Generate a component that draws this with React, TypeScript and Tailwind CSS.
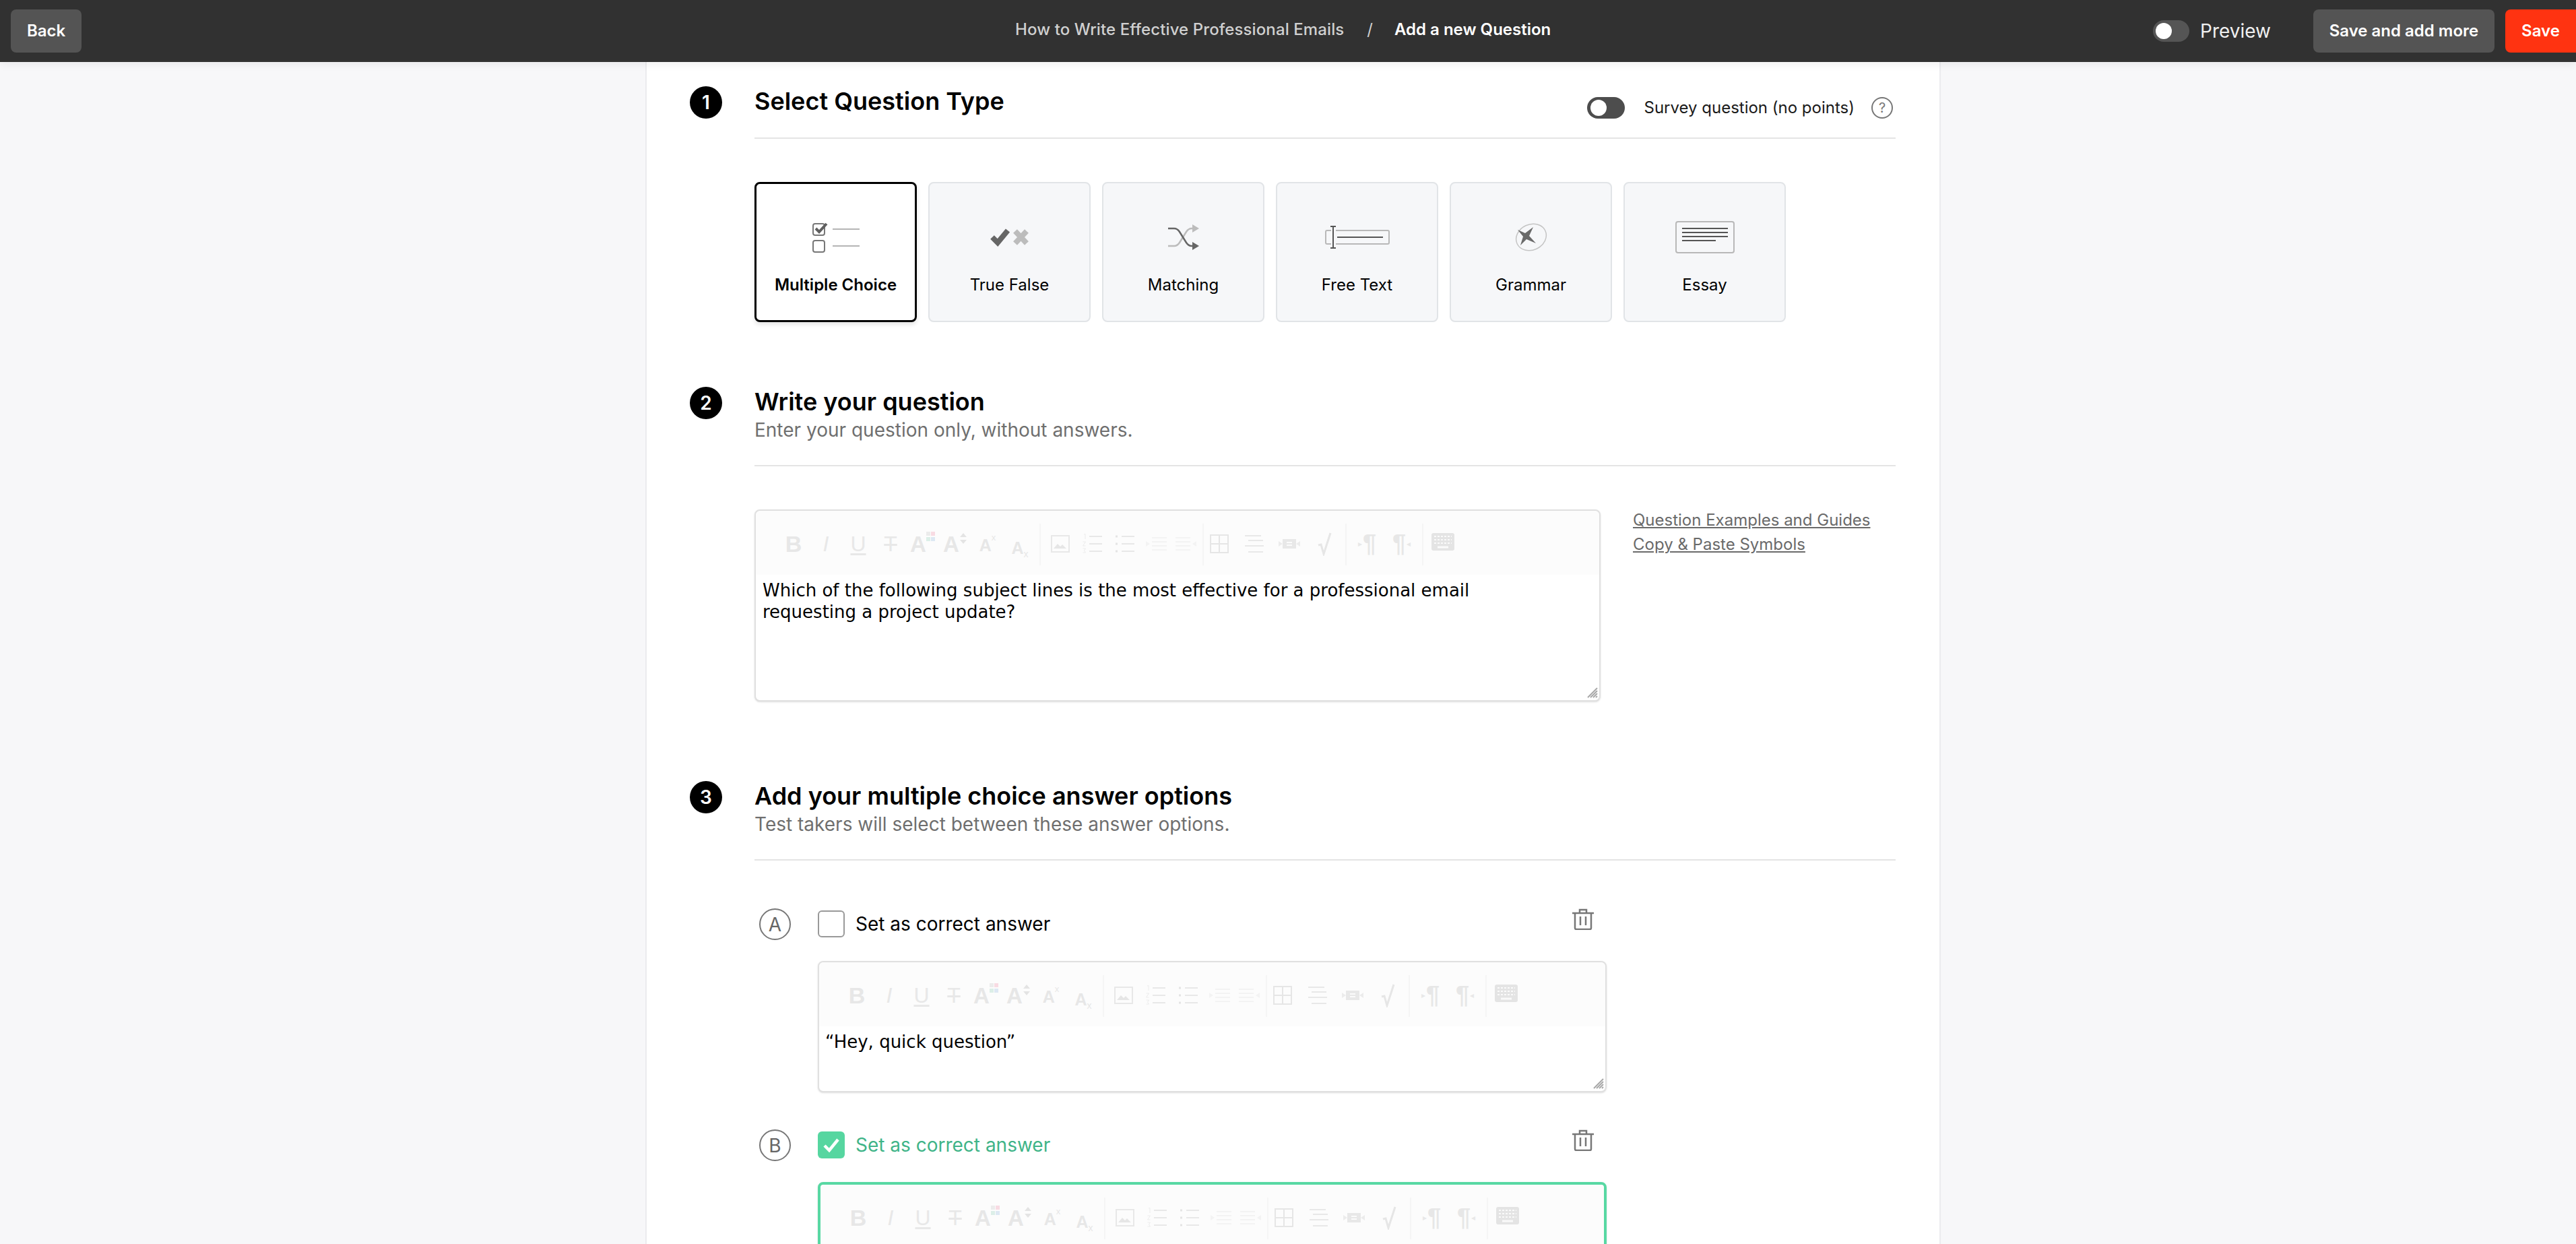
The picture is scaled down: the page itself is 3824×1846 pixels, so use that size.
import React from 'react';

const Sep = () => <div className="w-[2px] h-[62px] bg-[#f5f5f5] mx-[5px] mt-[2px] shrink-0"></div>;

const Letter: React.FC<{ children: React.ReactNode; className: string }> = ({ children, className }) => (
  <span className={`[font-family:'Liberation_Sans',sans-serif] leading-none text-[#e7e7e7] ${className}`}>{children}</span>
);

const Lines: React.FC<{ kind: 'num' | 'bullet' }> = ({ kind }) => (
  <svg width="32" height="30" viewBox="0 0 32 30" fill="none">
    <path d="M11 4h19M11 15h19M11 26h19" stroke="#e8e8e8" strokeWidth="2" />
    {kind === 'bullet' ? (
      <path d="M2 2.500h3v3H2zM2 13.500h3v3H2zM2 24.500h3v3H2z" fill="#e4e4e4" />
    ) : (
      <path d="M3 1l2-.5V8M1.500 12h4l-4 6h4M1.500 22h4l-2 3 2 3h-4" stroke="#ececec" strokeWidth="1" />
    )}
  </svg>
);

const Indent: React.FC<{ flip?: boolean }> = ({ flip }) => (
  <svg width="34" height="26" viewBox="0 0 34 26" fill="none" className={flip ? '-scale-x-100' : ''}>
    <path d="M10 4h22M10 10h22M10 16h22M10 22h22" stroke="#f3f3f3" strokeWidth="2" />
    <path d="M1 9l6 4-6 4z" fill="#f3f3f3" />
  </svg>
);

const Toolbar = () => (
  <div className="flex items-center h-[95px] pl-[32px] pt-[3px] bg-[#fcfcfc] rounded-t-[8px]">
    <div className="w-[48px] flex justify-center"><Letter className="text-[34px] font-bold">B</Letter></div>
    <div className="w-[48px] flex justify-center"><Letter className="text-[32px] italic !text-[#e8e8e8]">I</Letter></div>
    <div className="w-[48px] flex justify-center"><Letter className="text-[32px] !text-[#e8e8e8] underline underline-offset-[3px]">U</Letter></div>
    <div className="w-[48px] flex justify-center"><Letter className="text-[32px] !text-[#e8e8e8] line-through">T</Letter></div>
    <div className="w-[48px] flex justify-center items-start">
      <Letter className="text-[33px] font-bold">A</Letter>
      <svg width="14" height="16" viewBox="0 0 14 16" className="-mt-[2px]">
        <rect x="0" y="0" width="6" height="6" fill="#ececec" />
        <rect x="7" y="0" width="6" height="6" fill="#f8dbe3" />
        <rect x="0" y="8" width="6" height="6" fill="#dcefe8" />
        <rect x="7" y="8" width="6" height="6" fill="#dde8f3" />
      </svg>
    </div>
    <div className="w-[48px] flex justify-center items-start">
      <Letter className="text-[33px] font-bold">A</Letter>
      <svg width="12" height="18" viewBox="0 0 12 18" className="-mt-[1px]">
        <path d="M1 7l5-6 5 6zM1 11l5 6 5-6z" fill="#e4e4e4" />
      </svg>
    </div>
    <div className="w-[48px] flex justify-center items-start">
      <Letter className="text-[25px] font-bold pt-[5px]">A</Letter>
      <Letter className="text-[13px] -mt-[1px]">x</Letter>
    </div>
    <div className="w-[48px] flex justify-center items-end pt-[12px]">
      <Letter className="text-[25px] font-bold">A</Letter>
      <Letter className="text-[14px] -mb-[3px]">x</Letter>
    </div>
    <Sep />
    <div className="w-[48px] flex justify-center">
      <svg width="28" height="26" viewBox="0 0 28 26" fill="none">
        <rect x="1" y="1" width="26" height="24" stroke="#e8e8e8" strokeWidth="2" />
        <path d="M4 20l6-7 4 4 3-3 6 6z" fill="#e6e6e6" />
      </svg>
    </div>
    <div className="w-[48px] flex justify-center"><Lines kind="num" /></div>
    <div className="w-[48px] flex justify-center"><Lines kind="bullet" /></div>
    <div className="w-[46px] flex justify-center"><Indent /></div>
    <div className="w-[40px] flex justify-center"><Indent flip /></div>
    <Sep />
    <div className="w-[52px] flex justify-center -ml-[8px]">
      <svg width="28" height="28" viewBox="0 0 28 28" fill="none">
        <path d="M1 1h26v26H1zM14 1v26M1 14h26" stroke="#e6e6e6" strokeWidth="2" />
      </svg>
    </div>
    <div className="w-[52px] flex justify-center">
      <svg width="30" height="28" viewBox="0 0 30 28" fill="none">
        <path d="M1 2h24M6 9h22M1 17h28M6 26h22" stroke="#e8e8e8" strokeWidth="2" />
      </svg>
    </div>
    <div className="w-[52px] flex justify-center">
      <svg width="34" height="18" viewBox="0 0 34 18" fill="none">
        <rect x="7" y="2" width="20" height="14" fill="#e8e8e8" />
        <path d="M7 9L1 5v8zM27 9l6-4v8z" fill="#ececec" />
        <path d="M13 7h8M13 11h8" stroke="#fbfbfb" strokeWidth="2" />
      </svg>
    </div>
    <div className="w-[52px] flex justify-center">
      <svg width="22" height="36" viewBox="0 0 22 36" fill="none">
        <path d="M2 20l4-1 4 14L20 2" stroke="#e6e6e6" strokeWidth="3" />
      </svg>
    </div>
    <Sep />
    <div className="w-[51px] flex justify-center items-center">
      <span className="text-[12px] text-[#e8e8e8] mr-[1px]">&#9656;</span>
      <Letter className="text-[36px] font-bold">¶</Letter>
    </div>
    <div className="w-[51px] flex justify-center items-center">
      <Letter className="text-[36px] font-bold">¶</Letter>
      <span className="text-[12px] text-[#e8e8e8] ml-[1px]">&#9666;</span>
    </div>
    <Sep />
    <div className="w-[48px] flex justify-center">
      <svg width="34" height="26" viewBox="0 0 34 26" className="-mt-[6px]">
        <rect width="34" height="26" rx="3" fill="#e4e4e4" />
        <path d="M4 5h26M4 10h26M4 15h26" stroke="#fafafa" strokeWidth="2" strokeDasharray="3 2" />
        <path d="M9 21h16" stroke="#fafafa" strokeWidth="3" />
      </svg>
    </div>
  </div>
);

const Grip = () => (
  <svg width="16" height="16" viewBox="0 0 16 16" className="absolute right-[2px] bottom-[3px]" fill="none">
    <path d="M15 1L1 15M15 5L5 15M15 9l-6 6M15 13l-2 2" stroke="#a8a8a8" strokeWidth="2" />
  </svg>
);

const Editor: React.FC<{ text: React.ReactNode; className: string; bodyClass: string; grip?: boolean }> = ({ text, className, bodyClass, grip }) => (
  <div className={`relative rounded-[8px] bg-white shadow-sm ${className}`}>
    <Toolbar />
    <div className={`[font-family:'DejaVu_Sans',sans-serif] text-[26px] leading-[32px] text-black ${bodyClass}`}>{text}</div>
    {grip && <Grip />}
  </div>
);

const StepHead: React.FC<{ title: string; sub?: string; right?: React.ReactNode }> = ({ title, sub, right }) => (
  <div className={`flex justify-between items-start border-b-2 border-[#e4e4e4] ${sub ? 'h-[118px]' : 'h-[78px]'}`}>
    <div>
      <h2 className="text-[36px] leading-[44px] font-semibold text-black">{title}</h2>
      {sub && <p className="text-[28px] leading-[36px] mt-[2px] text-[#6f6f6f]">{sub}</p>}
    </div>
    {right}
  </div>
);

const Step: React.FC<{ n: number; className: string; children: React.ReactNode }> = ({ n, className, children }) => (
  <section className={`flex gap-[48px] ${className}`}>
    <div className="w-[48px] h-[48px] rounded-full bg-black text-white text-[28px] font-semibold flex items-center justify-center shrink-0">{n}</div>
    <div className="w-[1694px]">{children}</div>
  </section>
);

const McIcon = () => (
  <svg width="74" height="48" viewBox="0 0 74 48" fill="none">
    <rect x="3" y="4" width="17" height="17" rx="3" stroke="#777" strokeWidth="2" />
    <rect x="3" y="29" width="17" height="17" rx="3" stroke="#777" strokeWidth="2" />
    <path d="M7 11l5 5 11-12" stroke="#5f5f5f" strokeWidth="4" />
    <path d="M32 12h40M32 37h40" stroke="#b5b5b5" strokeWidth="2" />
  </svg>
);

const TfIcon = () => (
  <svg width="58" height="28" viewBox="0 0 58 28" fill="none">
    <path d="M3 14l8 8L26 4" stroke="#666" strokeWidth="8" />
    <path d="M37 5l17 18M54 5L37 23" stroke="#bcbcbc" strokeWidth="8" />
  </svg>
);

const MatchIcon = () => (
  <svg width="46" height="38" viewBox="0 0 46 38" fill="none">
    <path d="M0 32h9c4 0 6-2 8-5L27 11c2-3 4-5 8-5h3" stroke="#bcbcbc" strokeWidth="2.500" />
    <path d="M36 0l10 6-10 6z" fill="#bcbcbc" />
    <path d="M0 6h9c4 0 6 2 8 5l10 16c2 3 4 5 8 5h3" stroke="#666" strokeWidth="2.500" />
    <path d="M36 26l10 6-10 6z" fill="#666" />
  </svg>
);

const FreeIcon = () => (
  <svg width="96" height="34" viewBox="0 0 96 34" fill="none">
    <path d="M9 7H3a2 2 0 0 0-2 2v16a2 2 0 0 0 2 2h6M16 7h77a2 2 0 0 1 2 2v16a2 2 0 0 1-2 2H16" stroke="#b8b8b8" strokeWidth="2" />
    <path d="M12 1v32M8 1h8M8 33h8" stroke="#555" strokeWidth="2" />
    <path d="M18 17h68" stroke="#555" strokeWidth="2" />
  </svg>
);

const GrammarIcon = () => (
  <svg width="48" height="42" viewBox="0 0 48 42" fill="none">
    <ellipse cx="24" cy="21" rx="23" ry="19" transform="rotate(-25 24 21)" stroke="#c4c4c4" strokeWidth="1.500" />
    <path d="M4 10l11 5L27 6l-6 13 10 11-14-6-9 9 4-13z" fill="#6a6a6a" />
  </svg>
);

const EssayIcon = () => (
  <svg width="88" height="48" viewBox="0 0 88 48" fill="none">
    <rect x="1" y="1" width="86" height="46" rx="3" stroke="#b8b8b8" strokeWidth="2" />
    <path d="M10 11h68M10 17h68M10 23h68M10 29h50" stroke="#555" strokeWidth="2" />
  </svg>
);

const types = [
  { label: 'Multiple Choice', icon: <McIcon /> },
  { label: 'True False', icon: <TfIcon /> },
  { label: 'Matching', icon: <MatchIcon /> },
  { label: 'Free Text', icon: <FreeIcon /> },
  { label: 'Grammar', icon: <GrammarIcon /> },
  { label: 'Essay', icon: <EssayIcon /> },
];

const Trash = () => (
  <svg width="34" height="32" viewBox="0 0 34 32" fill="none" stroke="#777" strokeWidth="2.500">
    <path d="M1 7h32M12 7V2h10v5M5 7v22a2 2 0 0 0 2 2h20a2 2 0 0 0 2-2V7M13 12v13M21 12v13" />
  </svg>
);

const Answer: React.FC<{ letter: string; correct?: boolean; children: React.ReactNode }> = ({ letter, correct, children }) => (
  <div className="flex gap-[41px] pl-[7px]">
    <div className="w-[47px] h-[47px] rounded-full border-2 border-[#777] text-[#666] text-[28px] flex items-center justify-center shrink-0">{letter}</div>
    <div className="w-[1171px] -ml-[1px]">
      <div className="flex items-start justify-between h-[46px] pr-[18px]">
        <div className="flex items-center gap-[16px] h-[46px]">
          {correct ? (
            <div className="w-[40px] h-[40px] rounded-[6px] bg-[#56d6a0] flex items-center justify-center">
              <svg width="26" height="22" viewBox="0 0 26 22" fill="none">
                <path d="M3 12l7 7L23 3" stroke="white" strokeWidth="4.500" />
              </svg>
            </div>
          ) : (
            <div className="w-[40px] h-[40px] rounded-[6px] border-2 border-[#999] bg-white"></div>
          )}
          <span className={`text-[28px] ${correct ? 'text-[#3fb488]' : 'text-black'}`}>Set as correct answer</span>
        </div>
        <Trash />
      </div>
      <div className="mt-[32px]">{children}</div>
    </div>
  </div>
);

export default function App() {
  return (
    <div className="h-[1846px] overflow-hidden bg-[#f7f7f9] [font-family:Inter,sans-serif]">
      <header className="relative z-10 h-[92px] bg-[#313131] flex items-center justify-between pl-[16px] shadow-[0_4px_12px_rgba(0,0,0,0.06)]">
        <button className="w-[105px] h-[64px] rounded-[8px] bg-[#545454] text-white text-[24px] font-semibold">Back</button>
        <div className="absolute left-[1507px] top-0 h-[88px] flex items-center text-[24px]">
          <span className="text-[#d0d0d0] font-medium tracking-[0.1px]">How to Write Effective Professional Emails</span>
          <span className="text-[#d0d0d0] ml-[34px]">/</span>
          <span className="text-white font-semibold ml-[32px]">Add a new Question</span>
        </div>
        <div className="flex items-center">
          <div className="w-[54px] h-[32px] rounded-full bg-[#555] flex items-center pl-[4px]">
            <div className="w-[24px] h-[24px] rounded-full bg-white"></div>
          </div>
          <span className="text-[#f0f0f0] text-[28px] ml-[16px] mr-[63px]">Preview</span>
          <button className="w-[269px] h-[64px] rounded-[8px] bg-[#545454] text-white text-[24px] font-semibold">Save and add more</button>
          <button className="w-[105px] h-[64px] rounded-l-[8px] bg-[#ff3311] text-white text-[24px] font-semibold ml-[16px]">Save</button>
        </div>
      </header>

      <main className="ml-[958px] w-[1923px] h-[1754px] bg-white border-x-2 border-[#ebebee] pl-[64px] pt-[36px]">
        <Step n={1} className="">
          <StepHead
            title="Select Question Type"
            right={
              <div className="flex items-center h-[32px] mt-[16px] mr-[4px]">
                <div className="w-[56px] h-[32px] rounded-full bg-[#4d4d4d] flex items-center pl-[5px]">
                  <div className="w-[24px] h-[24px] rounded-full bg-white"></div>
                </div>
                <span className="text-[24px] text-[#1a1a1a] ml-[28px]">Survey question (no points)</span>
                <span className="w-[32px] h-[32px] rounded-full border-2 border-[#777] text-[#777] text-[20px] flex items-center justify-center ml-[25px]">?</span>
              </div>
            }
          />
          <div className="flex gap-[17px] mt-[64px]">
            {types.map((t, i) => (
              <div
                key={t.label}
                className={`w-[241px] h-[208px] rounded-[8px] flex flex-col items-center ${i === 0 ? 'border-[3px] border-black bg-white shadow-[0_4px_6px_rgba(0,0,0,0.1)]' : 'border-2 border-[#e1e4e7] bg-[#f6f7f9]'}`}
              >
                <div className={`flex items-center justify-center h-[48px] ${i === 0 ? 'mt-[55px]' : 'mt-[56px]'}`}>{t.icon}</div>
                <span className={`text-[24px] leading-[32px] mt-[31px] text-black ${i === 0 ? 'font-semibold' : ''}`}>{t.label}</span>
              </div>
            ))}
          </div>
        </Step>

        <Step n={2} className="mt-[96px]">
          <StepHead title="Write your question" sub="Enter your question only, without answers." />
          <div className="flex mt-[64px]">
            <Editor
              className="w-[1256px] h-[285px] border-2 border-[#e0e0e0]"
              bodyClass="px-[10px] pt-[7px]"
              grip
              text={<>Which of the following subject lines is the most effective for a professional email<br />requesting a project update?</>}
            />
            <div className="ml-[48px] -mt-[2px] text-[24px] leading-[36px] text-[#6a6a6a] underline">
              <div>Question Examples and Guides</div>
              <div>Copy &amp; Paste Symbols</div>
            </div>
          </div>
        </Step>

        <Step n={3} className="mt-[118px]">
          <StepHead title="Add your multiple choice answer options" sub="Test takers will select between these answer options." />
          <div className="mt-[71px] flex flex-col gap-[55px]">
            <Answer letter="A">
              <Editor className="h-[195px] border-2 border-[#e0e0e0]" bodyClass="px-[9px] pt-[7px]" grip text="“Hey, quick question”" />
            </Answer>
            <Answer letter="B" correct>
              <Editor className="h-[195px] border-[4px] border-[#58d8a3]" bodyClass="px-[10px] pt-[7px]" grip text="" />
            </Answer>
          </div>
        </Step>
      </main>
    </div>
  );
}
